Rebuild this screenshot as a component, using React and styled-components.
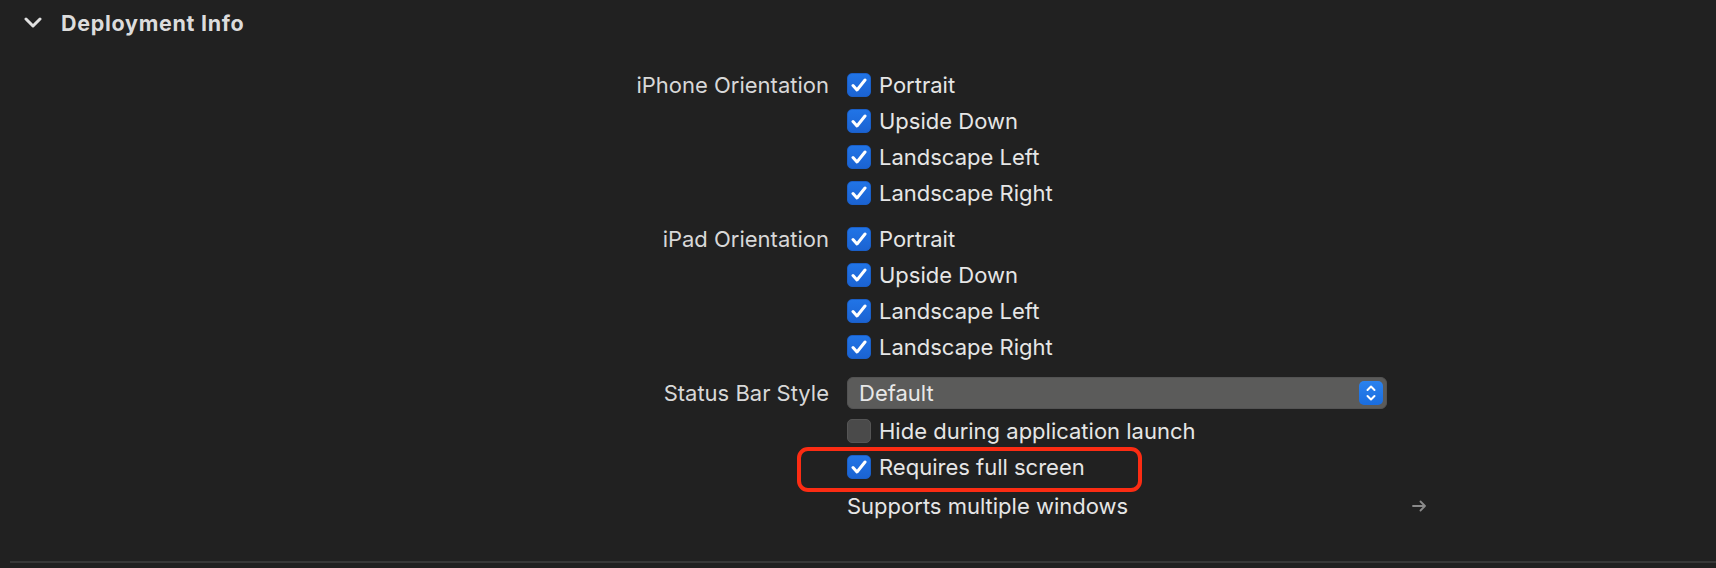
import React from "react";
import styled, { createGlobalStyle } from "styled-components";

const GlobalStyle = createGlobalStyle`
  body {
    margin: 0;
    background: #212121;
    font-family: Inter, "Noto Sans", "Liberation Sans", sans-serif;
    -webkit-font-smoothing: antialiased;
  }
`;

const Page = styled.div`
  position: relative;
  width: 1716px;
  height: 568px;
  background: #212121;
  display: flex;
  flex-direction: column;
  overflow: hidden;
`;

const Header = styled.div`
  height: 45px;
  display: flex;
  align-items: center;
  gap: 19px;
  padding-left: 24px;
`;

const HeaderTitle = styled.span`
  font-size: 21.5px;
  font-weight: 700;
  color: #dcdcdc;
  letter-spacing: 0.7px;
`;

const FieldRow = styled.div`
  display: grid;
  grid-template-columns: 829px 1fr;
  column-gap: 18px;
  margin-top: ${(p) => p.$top || 0}px;
`;

const Label = styled.div`
  text-align: right;
  font-size: 22px;
  color: #d8d8d8;
  height: ${(p) => p.$h || 36}px;
  line-height: ${(p) => p.$h || 36}px;
  white-space: nowrap;
`;

const Controls = styled.div`
  display: flex;
  flex-direction: column;
`;

const CheckRow = styled.div`
  height: 36px;
  display: flex;
  align-items: center;
  gap: 8px;
  font-size: 22px;
  color: #e6e6e6;
  white-space: nowrap;
`;

const Box = styled.span`
  width: 24px;
  height: 24px;
  box-sizing: border-box;
  border-radius: 5px;
  display: flex;
  align-items: center;
  justify-content: center;
  background: ${(p) =>
    p.$checked ? "linear-gradient(#2174e6, #1b63d2)" : "#4a4a4a"};
  border: 1px solid ${(p) => (p.$checked ? "#1a5fc8" : "#555555")};
`;

const Select = styled.div`
  width: 540px;
  height: 32px;
  box-sizing: border-box;
  border-radius: 6px;
  background: #5b5b5a;
  border: 1px solid #535353;
  display: flex;
  align-items: center;
  justify-content: space-between;
  padding: 0 3px 0 11px;
  font-size: 22px;
  color: #e8e8e8;
`;

const Stepper = styled.span`
  width: 24px;
  height: 24px;
  border-radius: 5px;
  background: linear-gradient(#2a82ee, #1a6ddf);
  display: flex;
  align-items: center;
  justify-content: center;
`;

const LinkRow = styled.div`
  width: 580px;
  height: 36px;
  display: flex;
  align-items: center;
  justify-content: space-between;
  font-size: 22px;
  color: #e6e6e6;
`;

const Highlight = styled.div`
  position: absolute;
  left: 797px;
  top: 447px;
  width: 345px;
  height: 45px;
  box-sizing: border-box;
  border: 4.5px solid #fc2c13;
  border-radius: 11px;
  pointer-events: none;
`;

const Divider = styled.div`
  margin: auto 0 5px 10px;
  height: 2px;
  background: #383838;
`;

const Chevron = () => (
  <svg width="18" height="11" viewBox="0 0 18 11">
    <path d="M2 2 L9 9 L16 2" fill="none" stroke="#e0e0e0" strokeWidth="3" strokeLinecap="round" strokeLinejoin="round" />
  </svg>
);

const Check = () => (
  <svg width="16" height="14" viewBox="0 0 16 14">
    <path d="M2 7.5 L6 12 L14 2" fill="none" stroke="#ffffff" strokeWidth="3" strokeLinecap="round" strokeLinejoin="round" />
  </svg>
);

const UpDown = () => (
  <svg width="12" height="18" viewBox="0 0 12 18">
    <path d="M2.5 6 L6 2.5 L9.5 6 M2.5 12 L6 15.5 L9.5 12" fill="none" stroke="#ffffff" strokeWidth="2" strokeLinecap="round" strokeLinejoin="round" />
  </svg>
);

const Arrow = () => (
  <svg width="15" height="12" viewBox="0 0 15 12">
    <path d="M1 6 H13 M8.5 1.5 L13 6 L8.5 10.5" fill="none" stroke="#8a8a8a" strokeWidth="1.8" strokeLinecap="round" strokeLinejoin="round" />
  </svg>
);

const Checkbox = ({ checked, label }) => (
  <CheckRow>
    <Box $checked={checked}>{checked && <Check />}</Box>
    {label}
  </CheckRow>
);

const orientations = ["Portrait", "Upside Down", "Landscape Left", "Landscape Right"];

export default function App() {
  return (
    <Page>
      <GlobalStyle />
      <Header>
        <Chevron />
        <HeaderTitle>Deployment Info</HeaderTitle>
      </Header>

      <FieldRow $top={22}>
        <Label>iPhone Orientation</Label>
        <Controls>
          {orientations.map((o) => (
            <Checkbox key={o} checked label={o} />
          ))}
        </Controls>
      </FieldRow>

      <FieldRow $top={10}>
        <Label>iPad Orientation</Label>
        <Controls>
          {orientations.map((o) => (
            <Checkbox key={o} checked label={o} />
          ))}
        </Controls>
      </FieldRow>

      <FieldRow $top={12}>
        <Label $h={32}>Status Bar Style</Label>
        <Controls>
          <Select>
            Default
            <Stepper>
              <UpDown />
            </Stepper>
          </Select>
        </Controls>
      </FieldRow>

      <FieldRow $top={4}>
        <Label />
        <Controls>
          <Checkbox checked={false} label="Hide during application launch" />
          <Checkbox checked label="Requires full screen" />
        </Controls>
      </FieldRow>

      <FieldRow $top={3}>
        <Label />
        <Controls>
          <LinkRow>
            Supports multiple windows
            <Arrow />
          </LinkRow>
        </Controls>
      </FieldRow>

      <Highlight />
      <Divider />
    </Page>
  );
}
